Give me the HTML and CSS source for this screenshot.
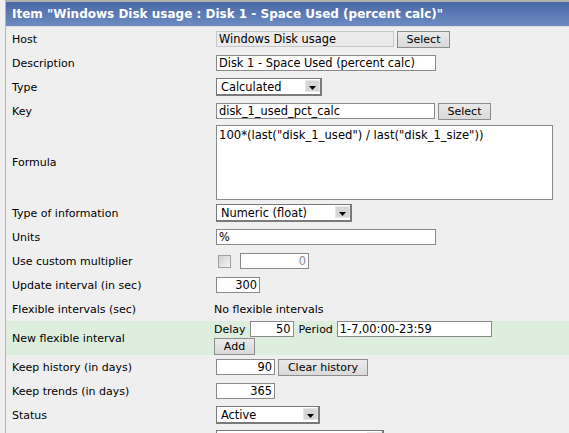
FILE: index.html
```html
<!DOCTYPE html>
<html>
<head>
<meta charset="utf-8">
<link rel="stylesheet" href="styles.css">
</head>
<body>
<div class="frame">
  <div class="title">Item "Windows Disk usage : Disk 1 - Space Used (percent calc)"</div>
  <div class="form">
    <div class="row"><div class="lbl">Host</div><div class="val"><input class="txt ro w178" value="Windows Disk usage" readonly><button class="btn w52">Select</button></div></div>
    <div class="row"><div class="lbl">Description</div><div class="val"><input class="txt w219" value="Disk 1 - Space Used (percent calc)"></div></div>
    <div class="row"><div class="lbl">Type</div><div class="val"><span class="sel w106"><select><option>Calculated</option></select><span class="arr"><svg width="9" height="5" viewBox="0 0 9 5"><path d="M0 0H9L4.5 5Z" fill="#000"/></svg></span></span></div></div>
    <div class="row"><div class="lbl">Key</div><div class="val"><input class="txt w218" value="disk_1_used_pct_calc"><button class="btn w52">Select</button></div></div>
    <div class="row tall"><div class="lbl">Formula</div><div class="val"><textarea class="area">100*(last("disk_1_used") / last("disk_1_size"))</textarea></div></div>
    <div class="row"><div class="lbl">Type of information</div><div class="val"><span class="sel w136"><select><option>Numeric (float)</option></select><span class="arr"><svg width="9" height="5" viewBox="0 0 9 5"><path d="M0 0H9L4.5 5Z" fill="#000"/></svg></span></span></div></div>
    <div class="row"><div class="lbl">Units</div><div class="val"><input class="txt w219" value="%"></div></div>
    <div class="row"><div class="lbl">Use custom multiplier</div><div class="val"><span class="chk"></span><input class="txt num dis w68" value="0"></div></div>
    <div class="row"><div class="lbl">Update interval (in sec)</div><div class="val"><input class="txt num w43" value="300"></div></div>
    <div class="row"><div class="lbl">Flexible intervals (sec)</div><div class="val"><span class="plain">No flexible intervals</span></div></div>
    <div class="row flex"><div class="lbl">New flexible interval</div><div class="val col"><div class="line"><span class="plain">Delay</span><input class="txt num w43" value="50"><span class="plain">Period</span><input class="txt w154" value="1-7,00:00-23:59"></div><button class="btn w40">Add</button></div></div>
    <div class="row"><div class="lbl">Keep history (in days)</div><div class="val"><input class="txt num w58" value="90"><button class="btn w89">Clear history</button></div></div>
    <div class="row"><div class="lbl">Keep trends (in days)</div><div class="val"><input class="txt num w58" value="365"></div></div>
    <div class="row"><div class="lbl">Status</div><div class="val"><span class="sel w104"><select><option>Active</option></select><span class="arr"><svg width="9" height="5" viewBox="0 0 9 5"><path d="M0 0H9L4.5 5Z" fill="#000"/></svg></span></span></div></div>
    <div class="row"><div class="lbl"></div><div class="val"><span class="sel w168"><select><option></option></select><span class="arr"><svg width="9" height="5" viewBox="0 0 9 5"><path d="M0 0H9L4.5 5Z" fill="#000"/></svg></span></span></div></div>
  </div>
</div>
</body>
</html>
```
FILE: styles.css
```css
html, body {
  margin: 0;
  padding: 0;
  background: #efefef;
  overflow: hidden;
}
body {
  font-family: "DejaVu Sans", Verdana, sans-serif;
  font-size: 11px;
  color: #000;
  width: 569px;
  height: 433px;
}
.frame {
  margin-left: 5px;
  border-left: 1px solid #b4b4b4;
  border-top: 2px solid #b0b0b0;
}
.title {
  height: 24px;
  line-height: 24px;
  background: linear-gradient(#4a68a6, #6e8cc2);
  color: #fff;
  font-weight: bold;
  font-size: 12px;
  padding-left: 6px;
  white-space: nowrap;
  border-bottom: 1px solid #dcdcdc;
}
.form {
  display: flex;
  flex-direction: column;
}
.row {
  display: grid;
  grid-template-columns: 207px 1fr;
  height: 24px;
  align-items: center;
}
.row.tall { height: 78px; }
.row.flex { height: 34px; background: #deeedd; }
.lbl {
  padding-left: 6px;
  white-space: nowrap;
}
.val {
  display: flex;
  align-items: center;
  gap: 3px;
}
.val.col {
  flex-direction: column;
  align-items: flex-start;
  gap: 1px;
}
.line {
  display: flex;
  align-items: center;
  gap: 4px;
}
.plain { padding-left: 1px; }
.txt {
  box-sizing: border-box;
  height: 16px;
  border: 1px solid #8a8a8a;
  background: #fff;
  font: inherit;
  font-size: 11.4px;
  padding: 0 2px;
  margin: 0 0 0 3px;
  color: #000;
  outline: none;
}
.line .txt { margin-left: 0; }
.txt.ro { background: #ebebeb; border-color: #c8c8c8; }
.txt.num { text-align: right; }
.txt.dis { color: #8a8a8a; margin-left: 6px; }
.w178 { width: 178px; }
.w219 { width: 220px; }
.w218 { width: 219px; }
.w68 { width: 69px; }
.w43 { width: 44px; }
.w58 { width: 59px; }
.w154 { width: 155px; }
.btn {
  box-sizing: border-box;
  height: 17px;
  border: 1px solid #8d8d8d;
  background: linear-gradient(#eaeaea, #d9d9d9);
  font: inherit;
  padding: 0;
  color: #000;
}
.btn.w52 { width: 53px; }
.btn.w40 { width: 41px; margin-left: 1px; }
.btn.w89 { width: 90px; }
.area {
  box-sizing: border-box;
  margin-left: 3px;
  width: 337px;
  height: 75px;
  border: 1px solid #8a8a8a;
  font: inherit;
  font-size: 11.6px;
  padding: 2px 2px;
  resize: none;
  outline: none;
}
.sel {
  position: relative;
  display: inline-block;
  margin-left: 3px;
  height: 18px;
}
.sel select {
  appearance: none;
  -webkit-appearance: none;
  box-sizing: border-box;
  width: 100%;
  height: 18px;
  border: 1px solid #7a7a7a;
  border-right-width: 2px;
  border-bottom-width: 2px;
  background: #fff;
  font: inherit;
  font-size: 11.4px;
  padding: 0 4px;
  color: #000;
  outline: none;
}
.sel .arr {
  position: absolute;
  right: 2px;
  top: 2px;
  width: 15px;
  height: 12px;
  background: #d6d6d6;
  border: 1px solid #e8e8e8;
  box-sizing: border-box;
  display: flex;
  align-items: center;
  justify-content: center;
}
.sel .arr svg { margin-top: 3px; width: 7px; height: 4px; }
.w106 { width: 106px; }
.w136 { width: 136px; }
.w104 { width: 104px; }
.w168 { width: 168px; }
.chk {
  box-sizing: border-box;
  width: 13px;
  height: 13px;
  border: 1px solid #a0a0a0;
  background: linear-gradient(135deg, #d0d0d0, #f4f4f4);
  margin-left: 5px;
}
```
